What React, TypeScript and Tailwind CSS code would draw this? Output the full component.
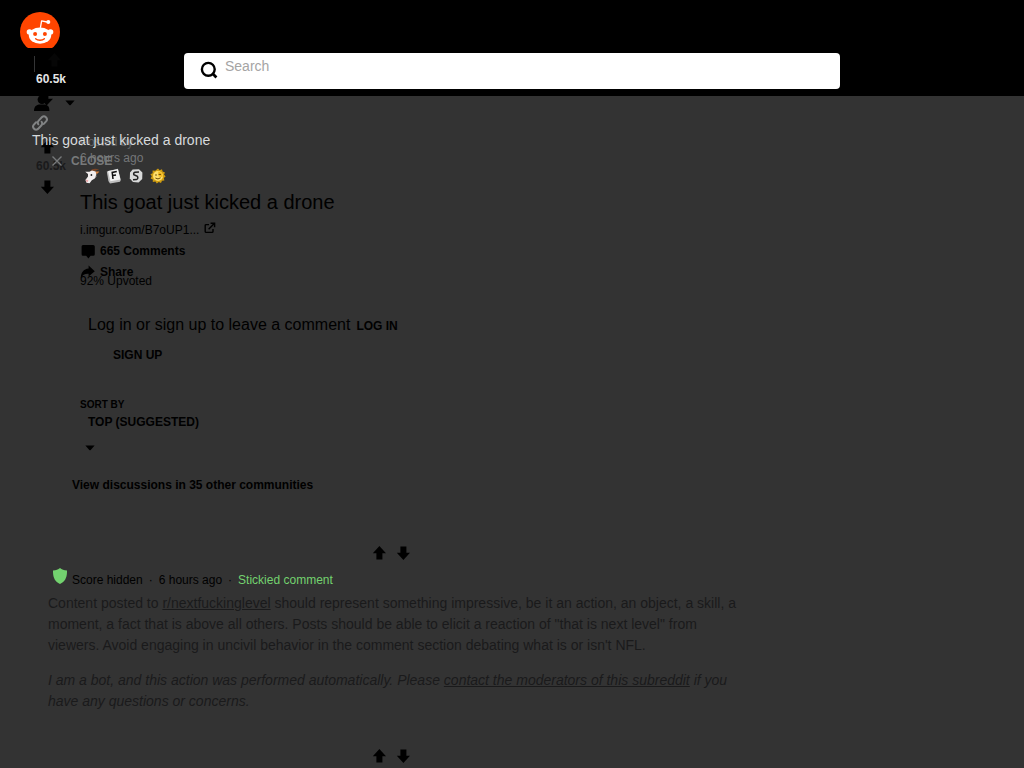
import type { ReactNode } from "react";

function RedditLogo() {
  return (
    <svg viewBox="0 0 40 36" className="h-9 w-10" aria-hidden>
      <circle cx="20" cy="20" r="20" fill="#ff4500" />
      <path
        d="M20.4 15.8 L21.6 8.8 L27 10"
        fill="none"
        stroke="#fff"
        strokeWidth="1.3"
        strokeLinejoin="round"
      />
      <circle cx="28.3" cy="10" r="2" fill="#fff" />
      <circle cx="9.5" cy="20" r="2.8" fill="#fff" />
      <circle cx="30.5" cy="20" r="2.8" fill="#fff" />
      <ellipse cx="20" cy="23.6" rx="11.2" ry="8.1" fill="#fff" />
      <circle cx="15.1" cy="22" r="2" fill="#ff4500" />
      <circle cx="24.9" cy="22" r="2" fill="#ff4500" />
      <path
        d="M15.6 26.8 C17.6 28.7 22.4 28.7 24.4 26.8"
        fill="none"
        stroke="#ff4500"
        strokeWidth="1.3"
        strokeLinecap="round"
      />
    </svg>
  );
}

function ArrowUp() {
  return (
    <svg viewBox="0 0 16 16" className="h-4 w-4" fill="currentColor" aria-hidden>
      <path d="M7.4 1 L14 8.2 H10.4 V14.4 H4.4 V8.2 H0.8 Z" />
    </svg>
  );
}

function ArrowDown() {
  return (
    <svg viewBox="0 0 16 16" className="h-4 w-4" fill="currentColor" aria-hidden>
      <path d="M7.4 15 L0.8 7.8 H4.4 V1.6 H10.4 V7.8 H14 Z" />
    </svg>
  );
}

function Caret() {
  return (
    <svg viewBox="0 0 10 6" className="h-[6px] w-[10px]" fill="currentColor" aria-hidden>
      <path d="M0.4 0.5 H9.6 L5.7 5 Q5 5.7 4.3 5 Z" />
    </svg>
  );
}

function SearchIcon() {
  return (
    <svg viewBox="0 0 18 18" className="h-[18px] w-[18px]" fill="none" stroke="#000" aria-hidden>
      <circle cx="8.3" cy="8.3" r="6.4" strokeWidth="2.4" />
      <path d="M12.6 12.6 L16.4 16.4" strokeWidth="2.8" />
    </svg>
  );
}

function UserIcon() {
  return (
    <svg viewBox="0 0 20 16" className="h-4 w-5" fill="currentColor" aria-hidden>
      <circle cx="8" cy="4.6" r="4.4" />
      <path d="M0 16 C0 11.5 2 10 5 9.4 H11 C14 10 15.4 11.5 15.4 16 Z" />
      <path d="M10.8 0 H14.4 V3.8 H19 L12.6 10.4 L8 5 Z" />
    </svg>
  );
}

function LinkIcon() {
  return (
    <svg
      viewBox="0 0 16 16"
      className="h-4 w-4"
      fill="none"
      stroke="currentColor"
      strokeWidth="2"
      strokeLinecap="round"
      aria-hidden
    >
      <path d="M6.3 9.3 A3 3 0 0 1 6.5 5.8 L10 2.1 A3 3 0 0 1 14.3 6.2 L11.8 8.9" />
      <path d="M9.6 6.8 A3 3 0 0 1 9.5 10.3 L6 13.9 A3 3 0 0 1 1.7 9.8 L4.1 7.2" />
    </svg>
  );
}

function CloseIcon() {
  return (
    <svg viewBox="0 0 10 10" className="h-[10px] w-[10px]" stroke="currentColor" strokeWidth="1.4" aria-hidden>
      <path d="M0.5 0.5 L9.5 9.5 M9.5 0.5 L0.5 9.5" />
    </svg>
  );
}

function OutboundIcon() {
  return (
    <svg viewBox="0 0 12 12" className="h-3 w-3" fill="none" stroke="currentColor" strokeWidth="1.4" aria-hidden>
      <path d="M5 2.6 H2.2 Q1.2 2.6 1.2 3.6 V9.4 Q1.2 10.4 2.2 10.4 H8 Q9 10.4 9 9.4 V7" />
      <path d="M4.6 7.2 L10 1.8" />
      <path d="M6.6 1.2 H10.6 V5.2" />
    </svg>
  );
}

function CommentIcon() {
  return (
    <svg viewBox="0 0 16 16" className="h-4 w-4" fill="currentColor" aria-hidden>
      <path d="M3 2 H13.2 Q14.8 2 14.8 3.6 V11.2 Q14.8 12.8 13.2 12.8 H10.6 L8.4 15.6 L6.2 12.8 H3 Q1.6 12.8 1.6 11.2 V3.6 Q1.6 2 3 2 Z" />
    </svg>
  );
}

function ShareIcon() {
  return (
    <svg viewBox="0 0 16 16" className="h-4 w-4" fill="currentColor" aria-hidden>
      <path d="M8.6 1.6 L14.8 7.2 L8.6 12.6 V9.8 C5 9.6 2.4 11 0.8 14.2 C0.8 8.8 3.6 5 8.6 4.6 Z" />
    </svg>
  );
}

function ShieldIcon() {
  return (
    <svg viewBox="0 0 14 16" className="h-4 w-[14px]" fill="#73d26f" aria-hidden>
      <path d="M7 0 C8.8 1.6 11 2.4 14 2.4 C14.2 9 12.4 13.6 7 16 C1.6 13.6 -0.2 9 0 2.4 C3 2.4 5.2 1.6 7 0 Z" />
    </svg>
  );
}

function GoatAward() {
  return (
    <svg viewBox="0 0 16 16" className="h-4 w-4" aria-hidden>
      <path d="M6 3.4 C8 0.4 12 0.2 15.2 1.8 C12.8 1.8 10.6 2.8 9.6 4.8 Z" fill="#7a4526" />
      <path d="M11.4 3.6 L15.4 3.4 L13.6 5.6 L11 6 Z" fill="#d98545" />
      <path
        d="M1.2 3.8 L5.4 3.8 L8 2.6 L11.6 3.6 L12.4 7 L10.8 10.4 L7.8 12.2 L5.6 15.2 L2.4 14.8 L1.4 12 L4 8.4 L4 6 Z"
        fill="#f2eeee"
      />
      <path d="M1.8 11.6 L4.4 12.2 L3.8 14 L2.2 13.8 Z" fill="#eba9aa" />
      <path d="M11.4 7.4 L12.6 8.2 L10.8 10.2 Z" fill="#b9b4b4" />
      <circle cx="7.4" cy="7" r="0.9" fill="#222" />
    </svg>
  );
}

function KeyAward() {
  return (
    <svg viewBox="0 0 16 16" className="h-4 w-4" aria-hidden>
      <path d="M0.8 3.4 L11.8 0.8 L14.8 12 L14 13.8 L4 15.4 L2.4 13 Z" fill="#bdbdbd" />
      <path d="M2 3 L12 1.2 L14.4 11.6 L4.4 13.2 Z" fill="#f2f2f2" />
      <path d="M7 11 L6.2 4.4 L10.8 3.6 M6.6 7.6 L10 7" stroke="#111" strokeWidth="1.5" fill="none" />
    </svg>
  );
}

function SilverAward() {
  return (
    <svg viewBox="0 0 16 16" className="h-4 w-4" aria-hidden>
      <path d="M4.6 1.6 L11 1.2 L14.4 4.6 L14.2 11 L10.6 14.4 L5 14 L1.8 10.6 L2 4.6 Z" fill="#d9dada" />
      <path
        d="M11 4 L7 4.2 Q5.2 4.8 5.8 6.6 L9.4 8.4 Q10.6 10.8 8.4 11.6 L5 11.8"
        stroke="#222"
        strokeWidth="1.5"
        fill="none"
      />
    </svg>
  );
}

function SunAward() {
  return (
    <svg viewBox="0 0 16 16" className="h-4 w-4" aria-hidden>
      <path
        d="M8 0.4 L9.6 2.2 L12 1.2 L12.6 3.6 L15 4.4 L14 6.6 L15.6 8.4 L13.8 10 L14.4 12.4 L12 12.8 L11 15 L8.8 14 L6.8 15.6 L5.4 13.6 L2.8 14 L2.8 11.6 L0.6 10.4 L1.8 8.2 L0.4 6.2 L2.6 5.2 L2.6 2.6 L5.2 2.8 Z"
        fill="#cf9c10"
      />
      <circle cx="8" cy="8" r="5" fill="#ffdf6b" />
      <path d="M8.2 3.4 A4.8 4.8 0 0 1 12.6 9 L8.6 8.6 Z" fill="#f3b91e" />
      <circle cx="6" cy="7" r="0.8" fill="#6b4a05" />
      <path d="M8.6 6.4 H11 M5.4 10 Q8 12 10.6 9.8" stroke="#6b4a05" strokeWidth="1" fill="none" />
    </svg>
  );
}

function IconButton({ label, children }: { label: string; children: ReactNode }) {
  return (
    <button type="button" aria-label={label} className="block">
      {children}
    </button>
  );
}

function CommentVotes() {
  return (
    <div className="flex h-4 justify-center gap-2">
      <IconButton label="Upvote comment">
        <ArrowUp />
      </IconButton>
      <IconButton label="Downvote comment">
        <ArrowDown />
      </IconButton>
    </div>
  );
}

function Header() {
  return (
    <header className="h-24 bg-black">
      <div className="flex h-12 items-end pl-5">
        <a href="#home" aria-label="Home">
          <RedditLogo />
        </a>
      </div>
      <form className="mx-auto mt-[5px] flex h-9 w-full max-w-[656px] rounded bg-white pl-4">
        <label htmlFor="search" aria-label="Search" className="mt-2">
          <SearchIcon />
        </label>
        <input
          id="search"
          type="text"
          placeholder="Search"
          className="ml-[7px] h-[26px] grow bg-transparent text-sm outline-none placeholder:text-[#a5a4a4]"
        />
      </form>
    </header>
  );
}

// Sticky post bar that floats over the page header and the post itself
function PostBar() {
  return (
    <div className="absolute top-12 left-8 z-10 w-60">
      <div className="flex h-6 items-end gap-3 pl-[2px]">
        <span className="h-4 w-px bg-[#343536]" />
        <span className="mb-1 text-[#060606]">
          <ArrowUp />
        </span>
      </div>
      <div className="-mt-px pl-1 text-xs leading-4 font-bold text-[#e4e5e6]">60.5k</div>
      <div className="mt-2 flex h-4 items-center gap-[11px] pl-[2px]">
        <IconButton label="User menu">
          <UserIcon />
        </IconButton>
        <IconButton label="Open menu">
          <Caret />
        </IconButton>
      </div>
      <div className="mt-1 text-[#818384]">
        <LinkIcon />
      </div>
      <div className="mt-px text-sm leading-4 text-[#d7dadc]">This goat just kicked a drone</div>
      <button type="button" className="mt-[5px] flex h-4 items-center gap-[9px] pl-5 text-xs font-bold text-[#787a7b]">
        <CloseIcon />
        CLOSE
      </button>
    </div>
  );
}

function PostVotes() {
  return (
    <div className="flex w-8 flex-col items-center pt-[5px]">
      <IconButton label="Upvote">
        <ArrowUp />
      </IconButton>
      <div className="mt-[3px] mb-1 pl-[6px] text-xs leading-4 font-bold text-[#1a1a1b]">60.5k</div>
      <div className="mt-px">
        <IconButton label="Downvote">
          <ArrowDown />
        </IconButton>
      </div>
    </div>
  );
}

function Post() {
  return (
    <article className="flex gap-4">
      <PostVotes />
      <div className="text-xs leading-4">
        <div className="text-[#5f6163]">Posted by</div>
        <div className="text-[#747678]">6 hours ago</div>
        <div className="mt-[2px] flex gap-[6px] pl-1">
          <GoatAward />
          <KeyAward />
          <SilverAward />
          <SunAward />
        </div>
        <h1 className="mt-[6px] text-xl leading-6">This goat just kicked a drone</h1>
        <a href="#source" className="mt-2 flex gap-[5px]">
          i.imgur.com/B7oUP1...
          <OutboundIcon />
        </a>
        <a href="#comments" className="mt-[5px] flex gap-1 font-bold">
          <CommentIcon />
          665 Comments
        </a>
        <button type="button" className="mt-[5px] flex gap-1 font-bold">
          <ShareIcon />
          Share
        </button>
        <div className="-mt-[7px]">92% Upvoted</div>

        <div className="mt-7 pl-2">
          <span className="text-base leading-4">Log in or sign up to leave a comment</span>
          <a href="#login" className="ml-[6px] font-bold">
            LOG IN
          </a>
        </div>
        <a href="#signup" className="mt-[13px] ml-[33px] block font-bold">
          SIGN UP
        </a>

        <div className="mt-[34px] text-[10px] font-bold">SORT BY</div>
        <button type="button" className="mt-px block pl-2 text-left font-bold">
          TOP (SUGGESTED)
          <span className="mt-[15px] -ml-[3px] block">
            <Caret />
          </span>
        </button>
      </div>
    </article>
  );
}

function StickiedComment() {
  return (
    <section className="mt-[52px] ml-4 max-w-[688px]">
      <CommentVotes />
      <div className="mt-[7px] flex gap-[5px] pl-[5px] text-xs leading-4">
        <ShieldIcon />
        <div className="mt-1 flex gap-[6px]">
          <span>Score hidden</span>
          <span>·</span>
          <span>6 hours ago</span>
          <span>·</span>
          <span className="text-[#73d26f]">Stickied comment</span>
        </div>
      </div>
      <div className="mt-[5px] text-sm leading-[21px] text-[#1a1a1b]">
        <p>
          Content posted to{" "}
          <a href="#sub" className="underline">
            r/nextfuckinglevel
          </a>{" "}
          should represent something impressive, be it an action, an object, a skill, a moment, a fact that is
          above all others. Posts should be able to elicit a reaction of "that is next level" from viewers. Avoid
          engaging in uncivil behavior in the comment section debating what is or isn't NFL.
        </p>
        <p className="mt-[14px] italic">
          I am a bot, and this action was performed automatically. Please{" "}
          <a href="#mods" className="underline">
            contact the moderators of this subreddit
          </a>{" "}
          if you have any questions or concerns.
        </p>
      </div>
      <div className="mt-9">
        <CommentVotes />
      </div>
    </section>
  );
}

export default function App() {
  return (
    <div className="relative min-h-screen bg-[#333333] font-['Liberation_Sans',Arial,sans-serif] text-black">
      <Header />
      <PostBar />
      <main className="px-8 pt-[38px]">
        <Post />
        <a href="#discussions" className="mt-[26px] ml-10 block text-xs leading-4 font-bold">
          View discussions in 35 other communities
        </a>
        <StickiedComment />
      </main>
    </div>
  );
}
